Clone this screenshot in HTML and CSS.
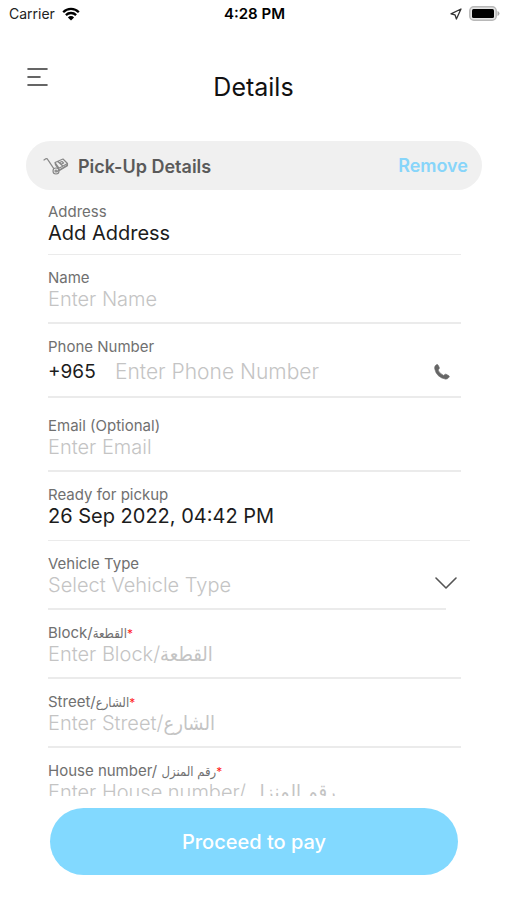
FILE: index.html
```html
<!DOCTYPE html>
<html lang="en">
<head>
<meta charset="utf-8">
<meta name="viewport" content="width=device-width, initial-scale=1">
<title>Details</title>
<link rel="stylesheet" href="styles.css">
</head>
<body>
<div class="status">
  <div class="status-side">
    <span>Carrier</span>
    <svg class="wifi" viewBox="0 0 18 14" aria-hidden="true">
      <path d="M1.2 5.2a11 11 0 0 1 15.6 0M3.9 8.1a7.2 7.2 0 0 1 10.2 0" fill="none" stroke="#000" stroke-width="2.3"/>
      <path d="M9 13.6 5.9 10.4a4.4 4.4 0 0 1 6.2 0z"/>
    </svg>
  </div>
  <span class="clock">4:28 PM</span>
  <div class="status-side status-end">
    <svg class="locate" viewBox="0 0 12 12" aria-hidden="true"><path d="M11 1 1 5.800l4 1L6.400 11z" fill="none" stroke="#333" stroke-width="1.300" stroke-linejoin="round"/></svg>
    <svg class="battery" viewBox="0 0 31 15" aria-hidden="true"><rect x=".8" y=".8" width="26.400" height="13.400" rx="4" fill="#e4e4e4" stroke="#b8b8b8" stroke-width="1.500"/><rect x="3" y="3" width="22" height="9" rx="1.500"/><path d="M28.500 5v5q2-.8 2-2.500t-2-2.500z" fill="#aaa"/></svg>
  </div>
</div>

<header class="header">
  <button class="menu" type="button" aria-label="Menu">
    <svg viewBox="0 0 22 20" aria-hidden="true"><path d="M2 2h19M2 10h12M2 18h19" fill="none" stroke="#333" stroke-width="1.600" stroke-linecap="round"/></svg>
  </button>
  <h1 class="title">Details</h1>
</header>

<main class="content">
  <div class="section">
    <svg class="trolley" viewBox="0 0 26 18" aria-hidden="true" fill="none" stroke="#888" stroke-width="1.200" stroke-linecap="round" stroke-linejoin="round">
      <path d="M1 3 2.800 1.800q1.300-.4 2 .8l6 9M14 14.500l10.500-6.500"/>
      <circle cx="13" cy="14" r="3"/><circle cx="13" cy="14" r="1"/>
      <path d="m12 5.500 8-3.500 4.500 4.500-8.500 4.700zM14.500 4.300l5 4.500M16.500 5.500l2.500-1 1.600 1.500-2.500 1.200zM12 5.500l.6 2.500 3.800 5.500 8-4.800.1-2.200"/>
    </svg>
    <h2 class="section-title">Pick-Up Details</h2>
    <button class="remove" type="button">Remove</button>
  </div>

  <form class="form">
    <div class="field field-first">
      <label for="address">Address</label>
      <input id="address" type="text" value="Add Address">
    </div>
    <div class="field">
      <label for="name">Name</label>
      <input id="name" type="text" placeholder="Enter Name">
    </div>
    <div class="field field-phone">
      <label for="phone">Phone Number</label>
      <div class="row">
        <span class="code">+965</span>
        <input id="phone" type="tel" placeholder="Enter Phone Number">
        <svg class="phone" viewBox="0 0 16 16" aria-hidden="true"><path d="M1.300 1.700Q2.700.2 3.600.6q.6.3 1.700 3 .3.900-.4 1.500l-.8.900q.9 3 5.600 5.500l1.100-1q.6-.6 1.400-.2l2.600 1.400q.9.500.3 1.400-1.400 2.300-3.700 2Q2.500 13.300.7 4.800.4 2.900 1.300 1.700z" fill="#666" stroke="#666" stroke-width=".6"/></svg>
      </div>
    </div>
    <div class="field field-email">
      <label for="email">Email (Optional)</label>
      <input id="email" type="email" placeholder="Enter Email">
    </div>
    <div class="field field-date">
      <label for="ready">Ready for pickup</label>
      <input id="ready" type="text" value="26 Sep 2022, 04:42 PM">
    </div>
    <div class="field field-select">
      <label for="vehicle">Vehicle Type</label>
      <select id="vehicle"><option>Select Vehicle Type</option></select>
      <svg class="chevron" viewBox="0 0 22 12" aria-hidden="true"><path d="m1 1 10 10L21 1" fill="none" stroke="#555" stroke-width="1.600" stroke-linecap="round" stroke-linejoin="round"/></svg>
    </div>
    <div class="field">
      <label for="block">Block/<span class="arabic" lang="ar">القطعة</span><span class="required">*</span></label>
      <input id="block" type="text" placeholder="Enter Block/القطعة">
    </div>
    <div class="field">
      <label for="street">Street/<span class="arabic" lang="ar">الشارع</span><span class="required">*</span></label>
      <input id="street" type="text" placeholder="Enter Street/الشارع">
    </div>
    <div class="field">
      <label for="house">House number/ <span class="arabic" lang="ar">رقم المنزل</span><span class="required">*</span></label>
      <input id="house" type="text" placeholder="Enter House number/ رقم المنزل">
    </div>
  </form>
</main>

<footer class="footer">
  <button class="pay" type="button">Proceed to pay</button>
</footer>
</body>
</html>
```
FILE: styles.css
```css
* { box-sizing: border-box; }

body {
  margin: 0;
  height: 100vh;
  display: flex;
  flex-direction: column;
  overflow: hidden;
  background: #fff;
  color: #1c1c1c;
  font-family: Inter, "DejaVu Sans Condensed", "DejaVu Sans", sans-serif;
}

button, input, select {
  margin: 0;
  padding: 0;
  border: 0;
  background: none;
  font: inherit;
  color: inherit;
}

svg { display: block; flex: none; }

.status {
  display: grid;
  grid-template-columns: 1fr auto 1fr;
  align-items: center;
  height: 27px;
  padding: 0 7px 0 9px;
  font-size: 14px;
  color: #222;
}
.status-side { display: flex; align-items: center; gap: 7px; }
.status-end { justify-content: flex-end; }
.clock { font-size: 15px; font-weight: 600; color: #000; }
.wifi { width: 18px; height: 14px; }
.locate { width: 12px; height: 12px; }
.battery { width: 31px; height: 15px; }

.header {
  display: grid;
  grid-template-columns: 1fr auto 1fr;
  height: 114px;
  padding: 39px 26px 0;
}
.menu { width: 22px; height: 22px; }
.menu svg { width: 22px; height: 20px; }
.title {
  margin: 0;
  padding-top: 4px;
  font-size: 25px;
  line-height: 34px;
  font-weight: 400;
  color: #111;
}

.content { flex: 1; min-height: 0; overflow: hidden; }

.section {
  display: flex;
  align-items: center;
  gap: 9px;
  height: 49px;
  margin: 0 25px 0 26px;
  padding: 0 14px 0 17px;
  border-radius: 25px;
  background: #f0f0f0;
}
.trolley { width: 26px; height: 18px; }
.section-title {
  flex: 1;
  margin: 0;
  padding-top: 2px;
  font-size: 18px;
  line-height: 24px;
  font-weight: 600;
  color: #5a5a5a;
}
.remove { font-size: 18px; font-weight: 600; color: #87d5fa; }

.form { margin: 0 46px 0 48px; }

.field {
  position: relative;
  display: flex;
  flex-direction: column;
  padding: 14px 0 11px;
  border-bottom: 2px solid #ebebeb;
}
.field label { font-size: 15px; line-height: 18px; color: #707070; }
.field input, .field select {
  width: 100%;
  height: 24px;
  font-size: 20px;
  line-height: 24px;
  outline: 0;
}
.field input::placeholder { color: #c4c4c4; opacity: 1; font-weight: 300; }
.field select { appearance: none; color: #c4c4c4; font-weight: 300; }
.arabic { font-size: 13px; line-height: 1; }
.required { font-size: 12px; line-height: 1; color: #f22; }

.field-first { padding: 13px 0 9px; border-bottom-width: 1px; }
.field-phone { padding-bottom: 8px; }
.row { display: flex; align-items: center; height: 32px; }
.field .row input { flex: 1; width: auto; min-width: 0; font-size: 21px; }
.code { width: 67px; font-size: 19px; line-height: 24px; }
.phone { width: 16px; height: 16px; margin-right: 11px; }
.field-email { padding-top: 19px; }
.field-date { margin-right: -9px; border-bottom-width: 1px; padding-bottom: 12px; }
.field-select { margin-right: 15px; }
.chevron { position: absolute; right: -11px; top: 36px; width: 22px; height: 12px; }

.footer { padding: 12px 49px 25px 50px; }
.pay {
  width: 100%;
  height: 67px;
  border-radius: 34px;
  background: #82d9ff;
  color: #fff;
  font-size: 20px;
  font-weight: 500;
}
```
